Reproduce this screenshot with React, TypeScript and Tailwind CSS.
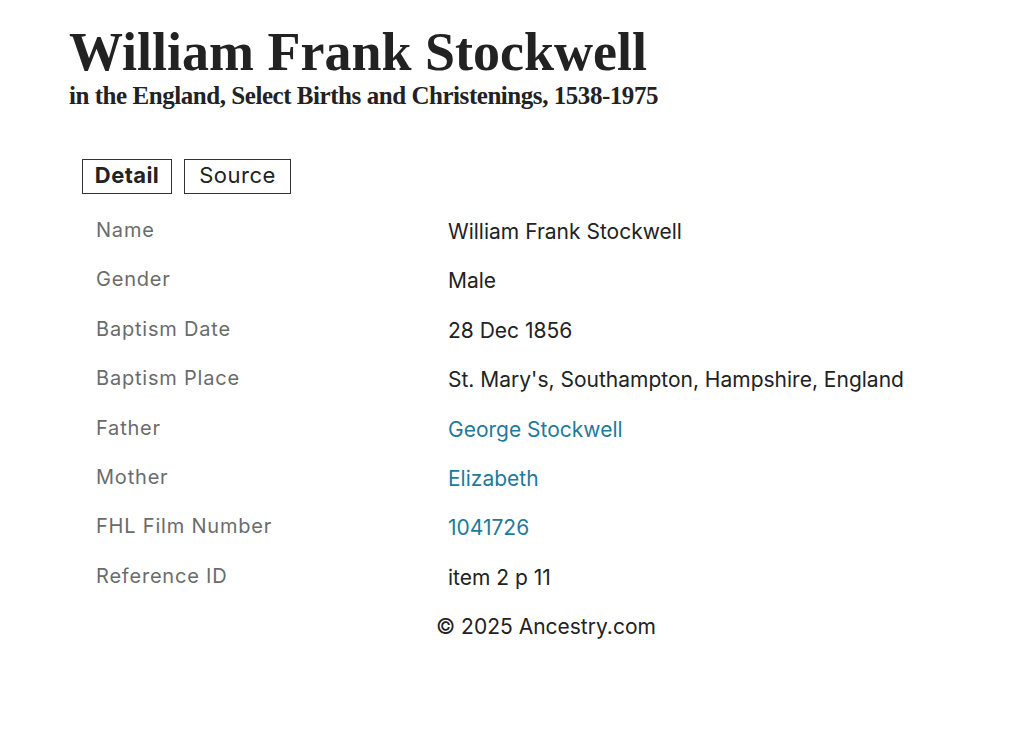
const rows: { label: string; value: string; link?: boolean }[] = [
  { label: "Name", value: "William Frank Stockwell" },
  { label: "Gender", value: "Male" },
  { label: "Baptism Date", value: "28 Dec 1856" },
  { label: "Baptism Place", value: "St. Mary's, Southampton, Hampshire, England" },
  { label: "Father", value: "George Stockwell", link: true },
  { label: "Mother", value: "Elizabeth", link: true },
  { label: "FHL Film Number", value: "1041726", link: true },
  { label: "Reference ID", value: "item 2 p 11" },
];

export default function App() {
  return (
    <div className="min-h-screen bg-white text-[#222] font-['Inter',sans-serif]">
      <div className="pl-[69px] pt-[22px]">
        <h1 className="font-['Liberation_Serif',serif] font-bold text-[54px] leading-[60px] tracking-normal text-[#222]">
          William Frank Stockwell
        </h1>
        <h2 className="font-['Liberation_Serif',serif] font-bold text-[25px] leading-[28px] tracking-[-0.45px] text-[#222]">
          in the England, Select Births and Christenings, 1538-1975
        </h2>
      </div>

      <div className="pl-[82px] pt-[49px] flex gap-3">
        <button className="border border-[#333] w-[90px] h-[35px] pb-[3px] text-[22px] font-bold leading-none tracking-[0.4px]">
          Detail
        </button>
        <button className="border border-[#333] w-[107px] h-[35px] pb-[3px] text-[22px] leading-none tracking-[0.5px]">
          Source
        </button>
      </div>

      <div className="pl-[96px] pt-[21px]">
        {rows.map((r) => (
          <div key={r.label} className="flex h-[49.4px] items-start">
            <div className="w-[352px] text-[20px] tracking-[0.8px] text-[#6b6b6b]">{r.label}</div>
            <div className={`pt-[1px] text-[21px] ${r.link ? "text-[#1f7a9b]" : "text-[#222]"}`}>
              {r.value}
            </div>
          </div>
        ))}
      </div>

      <div className="pl-[436px] pt-[1px] text-[21px] text-[#222]">© 2025 Ancestry.com</div>
    </div>
  );
}
